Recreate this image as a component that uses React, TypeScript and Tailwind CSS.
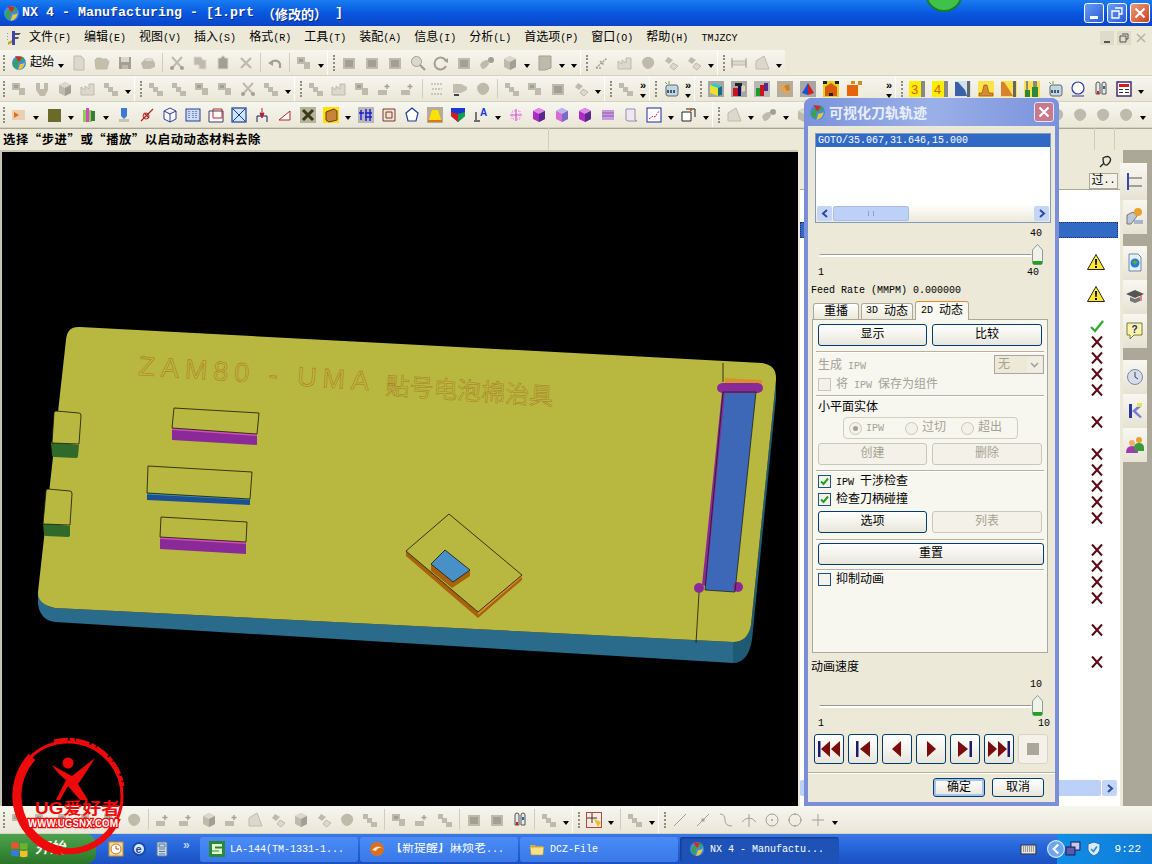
import type { ReactNode } from "react";

const gy = "#bebbad";
const gd = "#a3a093";
const gl = "#dcd9cc";

const cube = (a: string, b: string, c: string) => (
  <>
    <path d="M8 1l6 3v8l-6 3-6-3V4z" fill={b} />
    <path d="M8 1l6 3-6 3-6-3z" fill={a} />
    <path d="M8 7l6-3v8l-6 3z" fill={c} />
  </>
);

const icons: Record<string, ReactNode> = {
  globe: (
    <>
      <circle cx="8" cy="8" r="7" fill="#3f8fd8" />
      <path d="M2 9q3-7 10-7l2 3-7 2-1 7q-3-1-4-5z" fill="#3aa24a" />
      <path d="M4 1l7 1-3 5z" fill="#d8262c" />
      <path d="M9 9q4 0 5-2-1 7-7 8z" fill="#ecc53a" />
    </>
  ),
  tool: (
    <>
      <path d="M6 1h3v14H6z" fill="#3b46a8" />
      <path d="M9 3h6l-2 2h-4zM9 7h4l-1 2H9z" fill="#555" />
      <path d="M2 12l4-2v3l-4 2z" fill="#d0a030" />
      <path d="M1 3l1 0v1H1zM1 6h1v1H1zM1 9h1v1H1z" fill="#999" />
    </>
  ),
  page: <path d="M3 1h7l3 3v11H3z" fill={gl} stroke={gy} />,
  folder: <path d="M1 5l2-2h4l1 1h5v2h2l-2 8H2z" fill="#c4bfa8" stroke={gy} />,
  floppy: (
    <>
      <rect x="2" y="2" width="12" height="12" fill={gd} />
      <rect x="4" y="2" width="8" height="5" fill={gl} />
      <rect x="5" y="10" width="6" height="4" fill={gy} />
    </>
  ),
  printer: (
    <>
      <path d="M1 8l5-5h6l3 5v4l-5 2H3z" fill={gy} />
      <path d="M6 3h6l1 3H5z" fill={gl} />
    </>
  ),
  cut: (
    <>
      <path d="M3 2l10 11M13 2L3 13" stroke={gy} strokeWidth="2" fill="none" />
      <circle cx="3" cy="13" r="2" fill={gd} />
      <circle cx="13" cy="13" r="2" fill={gd} />
    </>
  ),
  copy: <path d="M2 2h7l2 3h3v9H7v-4H2z" fill={gy} stroke={gl} />,
  paste: <path d="M3 3h3l1-2h2l1 2h3v11H3z" fill={gd} stroke={gl} />,
  x: <path d="M3 3l10 10M13 3L3 13" stroke={gy} strokeWidth="2.4" fill="none" />,
  undo: (
    <>
      <path d="M4 8a5 5 0 0 1 9 1v4" stroke={gd} strokeWidth="2.2" fill="none" />
      <path d="M1 8l5-3v6z" fill={gd} />
    </>
  ),
  block: (
    <>
      <path d="M1 2h8v5h5v7H8V9H1z" fill={gy} />
      <path d="M3 4h4v3H3z" fill={gd} />
    </>
  ),
  square: (
    <>
      <rect x="2" y="3" width="12" height="11" fill={gy} />
      <rect x="4" y="5" width="8" height="7" fill={gd} />
    </>
  ),
  search: (
    <>
      <circle cx="6.5" cy="6.5" r="5" fill={gl} stroke={gd} />
      <path d="M10 10l5 5" stroke={gd} strokeWidth="2.4" />
    </>
  ),
  rotate: (
    <>
      <path d="M13 6a6 6 0 1 0 0 5" stroke={gd} strokeWidth="2" fill="none" />
      <path d="M11 6l4-3v5z" fill={gd} />
    </>
  ),
  cup: (
    <>
      <path d="M1 10q2-5 8-5l1 4q-3 5-7 5z" fill={gy} />
      <circle cx="12" cy="5" r="3" fill={gd} />
    </>
  ),
  cube: cube(gl, gy, gd),
  big: <path d="M2 1h12v12l-6 2H2z" fill={gy} stroke={gd} />,
  mill: (
    <>
      <path d="M1 14V6l4 3V5l4 3V3h5v11z" fill={gl} stroke={gy} />
    </>
  ),
  pipe: <path d="M2 2h4v6h4V2h4v7l-3 6H6L2 9z" fill={gy} />,
  net: <path d="M2 13L13 3M2 13h5M6 6l4 4" stroke={gd} strokeWidth="1.5" strokeDasharray="2 1" fill="none" />,
  blob: <path d="M2 6q3-5 8-4 5 2 4 7-2 5-7 5-5-2-5-8z" fill={gy} />,
  blobs: (
    <>
      <path d="M5 2l5 3-4 4-4-3z" fill={gy} />
      <path d="M10 8l5 3-4 4-4-3z" fill={gl} stroke={gy} />
    </>
  ),
  ruler: (
    <>
      <rect x="1" y="6" width="14" height="4" fill={gl} stroke={gy} />
      <path d="M1 3v10M15 3v10" stroke={gd} />
    </>
  ),
  wedge: <path d="M2 14L2 6 10 1l5 13z" fill={gl} stroke={gy} />,
  stair: <path d="M1 2h5v4h4v4h5v5h-6v-4H5V7H1z" fill={gy} />,
  funnel: (
    <>
      <path d="M1 3h8l6 3v3l-6 3H1z" fill="#c2bfb1" />
      <path d="M2 13h5v2H2z" fill="#444" />
    </>
  ),
  cross: (
    <>
      <path d="M1 9h9v5H1z" fill={gy} />
      <path d="M10 3v5M7.5 5.5h5" stroke={gd} strokeWidth="1.4" />
    </>
  ),
  dotted: (
    <>
      <path d="M2 3h12M3 8h10M2 13h12" stroke={gd} strokeDasharray="2 1" />
    </>
  ),
  boxYel: (
    <>
      <rect width="16" height="16" fill="#a6a6a6" />
      <path d="M2 4l4-2 8 3v9l-4 1-8-3z" fill="#e9e22c" />
      <path d="M2 4l4-2 8 3-4 2z" fill="#36c3d6" />
      <path d="M10 7l4-2v9l-4 1z" fill="#176c8a" />
    </>
  ),
  boxRed: (
    <>
      <rect width="16" height="16" fill="#a6a6a6" />
      <path d="M2 7h5v8H2z" fill="#c8141c" />
      <path d="M7 5h3v10H7z" fill="#101060" />
      <path d="M4 2h7v3H4z" fill="#222" />
      <path d="M11 4l3 1v5l-3 1z" fill="#e9d6b0" />
    </>
  ),
  boxMix: (
    <>
      <rect width="16" height="16" fill="#b8b8b8" />
      <path d="M2 7h4v8H2z" fill="#12a02c" />
      <path d="M6 4h4v11H6z" fill="#c8141c" />
      <path d="M10 2h4v8h-4z" fill="#5a2a8a" />
    </>
  ),
  boxOr: (
    <>
      <rect width="16" height="16" fill="#b5ad9a" />
      <path d="M3 3l4 1 6 6-3 4-7-6z" fill="#e2a458" />
      <path d="M7 5l5-2 1 6-3 1z" fill="#c98030" />
    </>
  ),
  boxBl: (
    <>
      <rect width="16" height="16" fill="#a6a6a6" />
      <path d="M8 2L2 12l6 2z" fill="#1c4fd0" />
      <path d="M8 2l6 10-6 2z" fill="#d41c1c" />
    </>
  ),
  boxChk: (
    <>
      <rect width="16" height="16" fill="#e8d020" />
      <path d="M2 6l6-4 6 4v9H2z" fill="#d85a0c" />
      <path d="M0 0h4v3H0zM12 0h4v3h-4zM6 12h4v3H6z" fill="#222" />
    </>
  ),
  boxOr2: (
    <>
      <rect width="16" height="16" fill="#f4f0d8" />
      <rect x="1" y="4" width="11" height="11" fill="#e8640c" />
      <path d="M12 0h4v4h-4zM5 0h4v3H5z" fill="#c89020" />
    </>
  ),
  three: (
    <>
      <rect width="12" height="16" fill="#ffee00" />
      <text x="2" y="13" fontSize="13" fontFamily="Liberation Sans" fill="#d85a0c">3</text>
      <rect x="12" y="0" width="4" height="16" fill="#888" />
    </>
  ),
  four: (
    <>
      <rect width="12" height="16" fill="#ffee00" />
      <text x="2" y="13" fontSize="13" fontFamily="Liberation Sans" fill="#d85a0c">4</text>
      <rect x="12" y="0" width="4" height="16" fill="#888" />
    </>
  ),
  slopeB: (
    <>
      <rect width="16" height="16" fill="#cfe0f0" />
      <path d="M0 1l3 0 7 8 2 6H0z" fill="#3a60a8" />
      <rect x="12" y="0" width="3" height="16" fill="#666" />
    </>
  ),
  mtn: (
    <>
      <rect width="16" height="16" fill="#ffe14a" />
      <path d="M1 15V12h3l2-8h3l2 8h4v3z" fill="#d88a30" stroke="#7a4a10" strokeWidth=".6" />
    </>
  ),
  slopeO: (
    <>
      <rect width="16" height="16" fill="#ffe14a" />
      <path d="M0 1h3l6 9 3 5H0z" fill="#d8832a" />
      <rect x="12" y="0" width="3" height="16" fill="#666" />
    </>
  ),
  brush: (
    <>
      <rect width="16" height="16" fill="#ffe14a" />
      <path d="M2 0h2v9H2zM9 0h4v6H9z" fill="#888" />
      <path d="M1 9h5v7H1zM8 6h6v10H8z" fill="#2a8a3a" />
    </>
  ),
  coil: (
    <>
      <rect x="3" y="4" width="12" height="11" rx="2" fill="#bcd8e8" stroke="#666" />
      <path d="M5 12v-3M8 12v-3M11 12v-3" stroke="#222" strokeWidth="1.4" />
      <path d="M2 1l2 2M6 0v3" stroke="#70a040" />
    </>
  ),
  ring: (
    <>
      <circle cx="8" cy="7" r="6" fill="#fff" stroke="#2a3a9a" strokeWidth="1.2" />
      <path d="M2 15h12" stroke="#2a3a9a" />
    </>
  ),
  tube: (
    <>
      <path d="M3 3a2 2 0 0 1 4 0v10H3zM9 3a2 2 0 0 1 4 0v10H9z" fill="#e8e8e8" stroke="#555" />
      <path d="M4 10h2v3H4z" fill="#d41c1c" />
      <path d="M10 5h2v3h-2z" fill="#2a6a9a" />
    </>
  ),
  table: (
    <>
      <rect x="1" y="1" width="14" height="14" fill="#fff" stroke="#3a1a6a" strokeWidth="1.4" />
      <path d="M3 3h10v3H3z" fill="#d41c1c" />
      <path d="M3 8h4v1H3zM9 8h4v1H9zM3 11h4v1H3zM9 11h4v1H9z" fill="#333" />
    </>
  ),
  tint: (
    <>
      <rect x="1" y="3" width="13" height="10" fill="#e8d0b0" />
      <path d="M3 5l5 3-5 3z" fill="#e86a1c" />
    </>
  ),
  olive: <rect x="2" y="2" width="13" height="13" fill="#6a6a2a" />,
  prism: (
    <>
      <path d="M2 3h9v12H2z" fill="#8ad04a" />
      <path d="M5 1h3v14H5z" fill="#d848c8" />
      <path d="M10 4h4v10h-4z" fill="#3a7a3a" />
    </>
  ),
  pin: (
    <>
      <path d="M5 1h6v8l-3 3-3-3z" fill="#3a7ad8" />
      <path d="M3 12h10v3H3z" fill="#c8c4b0" />
    </>
  ),
  cross2: (
    <>
      <path d="M2 14L14 2M5 6l5 5" stroke="#b4241c" strokeWidth="1.2" />
      <circle cx="7" cy="9" r="3" fill="none" stroke="#b4241c" />
    </>
  ),
  hexa: <path d="M8 1l6 3v8l-6 3-6-3V4zM8 7v8M2 4l6 3 6-3" fill="#fff" stroke="#2a3a9a" />,
  grid1: (
    <>
      <rect x="1" y="2" width="14" height="12" fill="#cde" stroke="#2a3a9a" />
      <path d="M4 4v8M8 4v8M11 4v8" stroke="#2a3a9a" strokeDasharray="1 1" />
    </>
  ),
  frame: (
    <>
      <path d="M1 4h14v11H1z" fill="#fff" stroke="#3a3a6a" />
      <path d="M5 2h9v9H5z" fill="none" stroke="#c4241c" />
    </>
  ),
  xbox: (
    <>
      <rect x="1" y="1" width="14" height="14" fill="#cfe8f8" stroke="#1a3a9a" strokeWidth="1.2" />
      <path d="M2 2l12 12M14 2L2 14" stroke="#1a3a9a" />
    </>
  ),
  crane: (
    <>
      <path d="M3 9h10v6M3 9v6" fill="none" stroke="#1a1a5a" />
      <path d="M8 1v4M6 6l2 5 2-5z" fill="#b01c3c" stroke="#b01c3c" />
    </>
  ),
  tri: <path d="M2 13L13 4v9z" fill="#fff" stroke="#b4241c" />,
  bug: (
    <>
      <rect width="16" height="16" fill="#b5b39a" />
      <path d="M3 3l10 10M13 3L3 13" stroke="#3a3a1a" strokeWidth="3" />
    </>
  ),
  crate: (
    <>
      <rect width="16" height="16" fill="#ffe100" />
      <path d="M3 5l8-3 3 2v9l-8 2-3-2z" fill="#c8843a" stroke="#6a3a10" />
    </>
  ),
  pai: (
    <>
      <rect width="16" height="16" fill="#b8b8b8" />
      <path d="M3 3v10M1 6h5M8 2v12M12 2v12M7 6h7M7 10h7" stroke="#1a1ad8" strokeWidth="1.4" />
    </>
  ),
  box2: <path d="M2 2h12v12H2zM5 5h6v6H5z" fill="#f0e4d0" stroke="#7a3a3a" />,
  isoBlue: <path d="M8 1l6 5-2 8H4L2 6z" fill="#fff" stroke="#1a3a9a" strokeWidth="1.2" />,
  bell: (
    <>
      <rect width="16" height="16" fill="#b5ad9a" />
      <path d="M5 3h6l3 10H2z" fill="#ffe100" />
      <path d="M1 13h14v2H1z" fill="#d87a1c" />
    </>
  ),
  shield: (
    <>
      <path d="M1 1h14v8l-7 6-7-6z" fill="#1a3ad8" />
      <path d="M1 5l7 2v8l-7-6z" fill="#d41c1c" />
      <path d="M8 7l7-2v4l-7 6z" fill="#12a04c" />
    </>
  ),
  letterA: (
    <>
      <path d="M3 5v8M1 14h6" stroke="#444" strokeWidth="1.4" />
      <text x="7" y="9" fontSize="10" fontWeight="700" fontFamily="Liberation Sans" fill="#1a3ad8">A</text>
    </>
  ),
  pinkT: (
    <>
      <path d="M2 8h12M8 2v12" stroke="#d84ad8" strokeWidth="1.2" />
      <rect x="4" y="4" width="8" height="8" fill="none" stroke="#e87ae8" strokeDasharray="1 1" />
    </>
  ),
  pinkB: cube("#e08ae8", "#b02ac8", "#5a2a8a"),
  pinkC: cube("#b8b8f0", "#d86ad8", "#7a6ac8"),
  pinkD: (
    <>
      <rect x="2" y="3" width="12" height="10" fill="#c89ae0" />
      <path d="M2 6h12M2 9h12" stroke="#8a5ab0" />
    </>
  ),
  scroll: <path d="M3 2h9v11l2 1H5l-2-1z" fill="#f0e8f0" stroke="#9a8ab0" />,
  zig: (
    <>
      <rect x="1" y="1" width="14" height="14" fill="#fff" stroke="#1a2a9a" />
      <path d="M3 12l4-3 2 1 4-6" stroke="#d41c6c" strokeDasharray="2 1" fill="none" />
    </>
  ),
  frame2: (
    <>
      <path d="M1 5h9v9H1z" fill="#fff" stroke="#222" />
      <path d="M5 2h9v8" fill="none" stroke="#222" />
      <path d="M9 1h2v3H9z" fill="#c8641c" />
    </>
  ),
  selected: (
    <>
      <rect x="0.5" y="0.5" width="15" height="15" fill="none" stroke="#b4443c" />
      <path d="M6 1v10M1 6h10" stroke="#5a2a1a" />
      <path d="M8 7l7 3-3 5z" fill="#e8c020" />
    </>
  ),
  lineA: <path d="M2 14L14 2" stroke="#a3a092" />,
  lineB: (
    <>
      <path d="M2 14L14 2" stroke="#a3a092" />
      <rect x="6.5" y="6.5" width="3" height="3" fill="#a3a092" />
    </>
  ),
  curve: <path d="M2 2q5 0 5 6t7 6" stroke="#a3a092" fill="none" />,
  arc: <path d="M1 10q7-8 14 0M8 2v13" stroke="#a3a092" fill="none" />,
  circ: (
    <>
      <circle cx="8" cy="8" r="6" fill="none" stroke="#a3a092" />
      <circle cx="8" cy="8" r="1" fill="#a3a092" />
    </>
  ),
  circ2: (
    <>
      <circle cx="8" cy="8" r="6" fill="none" stroke="#a3a092" />
      <path d="M1 8h2M13 8h2M8 1v2M8 13v2" stroke="#a3a092" />
    </>
  ),
  plus: <path d="M2 8h12M8 2v12" stroke="#a3a092" />,
};

type Tok = string;

// tokens: ^ first grip, : new group, | thin separator, v dropdown, » overflow
function Toolbar({ items, fill = true }: { items: Tok[]; fill?: boolean }) {
  return (
    <div className="flex h-[26px] items-stretch border-b border-[#d6d2c0] bg-[#ece9d8]">
      <div className={`flex items-center bg-linear-to-b from-[#f7f6ef] to-[#eae7d8] ${fill ? "flex-1" : ""}`}>
        {items.map((t, i) => {
          if (t === "^")
            return <div key={i} className="ml-[3px] mr-[2px] h-[16px] w-[2px] border-l-2 border-dotted border-[#8f8c7f]" />;
          if (t === ":")
            return (
              <div key={i} className="flex h-full w-[10px] shrink-0 items-center gap-[3px] border-l border-white">
                <div className="w-[2px]" />
                <div className="h-[16px] border-l-2 border-dotted border-[#8f8c7f]" />
              </div>
            );
          if (t === "|")
            return (
              <div key={i} className="flex h-full w-[6px] shrink-0 justify-center py-[3px]">
                <div className="w-px bg-[#d0cdbd]" />
              </div>
            );
          if (t === "v")
            return (
              <div key={i} className="flex h-full w-[12px] shrink-0 items-center justify-center pt-[6px]">
                <div className="h-0 w-0 border-x-[3px] border-t-[4px] border-x-transparent border-t-black" />
              </div>
            );
          if (t === "»")
            return (
              <div key={i} className="flex w-[12px] shrink-0 flex-col items-center font-['Liberation_Sans',sans-serif] text-[11px] font-bold leading-[10px]">
                <span>»</span>
                <div className="mt-[4px] h-0 w-0 border-x-[3px] border-t-[4px] border-x-transparent border-t-black" />
              </div>
            );
          if (t === "_") return <div key={i} className="w-[18px] shrink-0" />;
          if (t === "起始")
            return <span key={i} className="w-[25px] shrink-0 text-[12px]">起始</span>;
          return (
            <div key={i} className="flex w-[23px] shrink-0 items-center justify-center">
              <svg width="16" height="16" viewBox="0 0 16 16">{icons[t]}</svg>
            </div>
          );
        })}
      </div>
    </div>
  );
}

// SimSun-like mix: latin runs are half of the CJK width
function Mx({ t }: { t: string }) {
  const parts = t.split(/([\x00-\x7f]+)/).filter(Boolean);
  return (
    <>
      {parts.map((p, i) =>
        /^[\x00-\x7f]+$/.test(p) ? (
          <span key={i} className="whitespace-pre text-[0.834em]">{p}</span>
        ) : (
          <span key={i}>{p}</span>
        ),
      )}
    </>
  );
}

const row1 = ["^", "globe", "起始", "v", "page", "folder", "floppy", "printer", "|", "cut", "copy", "paste", "x", "|", "undo", "|", "block", "v", ":", "square", "square", "square", "search", "rotate", "square", "cup", "cube", "v", "big", "v", "v", ":", "net", "mill", "blob", "blobs", "blobs", "v", ":", "ruler", "wedge", "v"];
const row2 = ["^", "block", "pipe", "cube", "mill", "stair", "v", ":", "stair", "stair", "block", "block", "cut", "stair", "v", ":", "stair", "mill", "block", "cross", "cross", "|", "dotted", "funnel", "blob", "|", "stair", "block", "square", "blobs", "v", ":", "stair", "»", ":", "coil", "»", ":", "boxYel", "boxRed", "boxMix", "boxOr", "boxBl", "boxChk", "boxOr2", "_", "»", ":", "three", "four", "slopeB", "mtn", "slopeO", "brush", "coil", "ring", "tube", "table", "v"];
const row3 = ["^", "tint", "v", "olive", "v", "prism", "v", "pin", "cross2", "hexa", "grid1", "frame", "xbox", "crane", "tri", "bug", "crate", "v", "pai", "box2", "isoBlue", "bell", "shield", "letterA", "v", "pinkT", "pinkB", "pinkC", "pinkB", "pinkD", "scroll", "zig", "v", "frame2", "v", ":", "wedge", "v", "cup", "v", "cube", "cube", "cube", "cube", "cube", "cube", "cube", "cube", "cube", "cube", "cube", "blob", "blob", "blob", "blob", "v"];
const rowBottom = ["^", "block", "block", "block", "block", "block", "blob", "|", "cross", "cross", "cube", "cross", "wedge", "blobs", "cube", "blobs", "blob", "stair", "|", "block", "cross", "stair", "|", "square", "square", "tube", "|", "stair", "v", ":", "selected", "v", "|", "stair", "v", ":", "lineA", "lineB", "curve", "arc", "circ", "circ2", "plus", "v"];

function Btn({ label, disabled, className = "w-[109px]" }: { label: string; disabled?: boolean; className?: string }) {
  return (
    <div
      className={`flex h-[22px] items-center justify-center rounded-[3px] border ${
        disabled
          ? "border-[#c9c7ba] bg-[#f4f2e8] text-[#a5a293]"
          : "border-[#003c74] bg-linear-to-b from-white to-[#e8e6da] text-black"
      } ${className}`}
    >
      {label}
    </div>
  );
}

function Check({ checked, disabled, label }: { checked?: boolean; disabled?: boolean; label: string }) {
  return (
    <div className={`flex h-[12px] items-center gap-[5px] ${disabled ? "text-[#a5a293]" : ""}`}>
      <div className={`flex h-[13px] w-[13px] items-center justify-center border ${disabled ? "border-[#c9c7ba] bg-[#f4f2e8]" : "border-[#1c5180] bg-[#f4f2ea]"}`}>
        {checked && (
          <svg width="9" height="9" viewBox="0 0 9 9">
            <path d="M1 4.5l2.5 2.5L8 1.5" stroke="#21a121" strokeWidth="2" fill="none" />
          </svg>
        )}
      </div>
      <span className="pt-[2px] leading-[12px]"><Mx t={label} /></span>
    </div>
  );
}

function Radio({ label, on, w }: { label: string; on?: boolean; w: string }) {
  return (
    <div className={`flex items-center gap-[4px] text-[#a5a293] ${w}`}>
      <div className="flex h-[13px] w-[13px] items-center justify-center rounded-full border border-[#c9c7ba] bg-[#f4f2e8]">
        {on && <div className="h-[5px] w-[5px] rounded-full bg-[#a5a293]" />}
      </div>
      <span><Mx t={label} /></span>
    </div>
  );
}

function Slider() {
  return (
    <div className="flex h-[22px] items-center pl-[11px] pr-[12px]">
      <div className="mt-[2px] h-[3px] flex-1 rounded-full border-t border-[#9d9c92] bg-white" />
      <div className="flex h-[21px] w-[11px] flex-col">
        <svg width="11" height="21" viewBox="0 0 11 21">
          <path d="M5.5 .5L10.5 6v13l-1 1.500h-8l-1-1.500V6z" fill="#f2f2ea" stroke="#86a08c" />
          <path d="M1 17h9v2.500l-1 1H2l-1-1z" fill="#21a121" />
        </svg>
      </div>
    </div>
  );
}

const Sep = () => <div className="-mx-[2px] h-px bg-[#b5b2a4] shadow-[0_1px_0_white]" />;

type Shape = "first" | "prev" | "back" | "play" | "next" | "last";
const transport: Shape[] = ["first", "prev", "back", "play", "next", "last"];
const transportPath: Record<Shape, ReactNode> = {
  first: (
    <>
      <path d="M0 3h2.500v16H0z" fill="#1a1a6e" />
      <path d="M12 3v16L3 11zM22 3v16l-9-8z" fill="#7a0c0c" />
    </>
  ),
  prev: (
    <>
      <path d="M4 3h2.500v16H4z" fill="#1a1a6e" />
      <path d="M18 3v16L8 11z" fill="#7a0c0c" />
    </>
  ),
  back: <path d="M15 3v16L6 11z" fill="#7a0c0c" />,
  play: <path d="M7 3v16l9-8z" fill="#7a0c0c" />,
  next: (
    <>
      <path d="M4 3v16l10-8z" fill="#7a0c0c" />
      <path d="M15.500 3H18v16h-2.500z" fill="#1a1a6e" />
    </>
  ),
  last: (
    <>
      <path d="M0 3v16l9-8zM10 3v16l9-8z" fill="#7a0c0c" />
      <path d="M19.500 3H22v16h-2.500z" fill="#1a1a6e" />
    </>
  ),
};

const sideTabs: { icon: ReactNode; gap?: boolean }[] = [
  {
    icon: (
      <>
        <path d="M3 1h2v17H3z" fill="#3a46a8" />
        <path d="M5 6h13M5 14h13" stroke="#555" />
      </>
    ),
  },
  {
    icon: (
      <>
        <path d="M2 8l6-3 4 4-6 8H2z" fill="#bfc8d8" stroke="#777" />
        <circle cx="13" cy="5" r="4" fill="#e8a030" />
        <path d="M9 13h9v4H9z" fill="#a8b4c8" />
      </>
    ),
  },
  {
    gap: true,
    icon: (
      <>
        <path d="M4 1h9l3 3v14H4z" fill="#e8f0f8" stroke="#6a8aa8" />
        <circle cx="10" cy="10" r="4.500" fill="#2a7ad8" />
        <path d="M7 9q3-3 6 0l-3 3z" fill="#5aa83a" />
      </>
    ),
  },
  {
    icon: (
      <>
        <path d="M1 7l9-4 9 4-9 4z" fill="#555" />
        <path d="M5 10v4l5 2 5-2v-4l-5 2z" fill="#777" />
        <path d="M16 8v6" stroke="#d41c1c" />
      </>
    ),
  },
  {
    icon: (
      <>
        <path d="M2 2h15v12H9l-4 4v-4H2z" fill="#fbf4a8" stroke="#7a7a40" />
        <text x="6.500" y="12" fontSize="10" fontWeight="700" fontFamily="Liberation Sans" fill="#1a2a8a">?</text>
      </>
    ),
  },
  {
    gap: true,
    icon: (
      <>
        <circle cx="10" cy="10" r="7.500" fill="#d6dce8" stroke="#7a8aa8" />
        <path d="M10 5v5l3 2" stroke="#444" fill="none" />
      </>
    ),
  },
  {
    icon: (
      <>
        <path d="M4 3h3v14H4z" fill="#2a3a9a" />
        <path d="M7 10l8-7 2 2-6 5 6 6-2 1z" fill="#7a7ad8" />
        <path d="M12 2h5v4h-5z" fill="#e8e060" />
      </>
    ),
  },
  {
    icon: (
      <>
        <circle cx="7" cy="8" r="3" fill="#e8b070" />
        <path d="M1 18q0-7 6-7t6 7z" fill="#a03ab0" />
        <circle cx="14" cy="5" r="3" fill="#e8a030" />
        <path d="M9 13q0-5 5-5t5 5v3H10z" fill="#3a9a3a" />
      </>
    ),
  },
];

const statusRows: ("" | "warn" | "ok" | "x")[] = ["", "", "", "", "warn", "", "warn", "", "ok", "x", "x", "x", "x", "", "x", "", "x", "x", "x", "x", "x", "", "x", "x", "x", "x", "", "x", "", "x"];

function TaskBtn({ active, icon, text, w = "w-[158px]" }: { active?: boolean; icon: ReactNode; text: string; w?: string }) {
  return (
    <div
      className={`flex h-[25px] ${w} shrink-0 items-center gap-[5px] rounded-[3px] pl-[9px] ${
        active ? "bg-[#1e52b7] shadow-[inset_1px_1px_2px_#123a8a]" : "bg-linear-to-b from-[#4a8cf6] to-[#3a78e8]"
      }`}
    >
      <svg width="16" height="16" viewBox="0 0 16 16">{icon}</svg>
      <span className="truncate text-white"><Mx t={text} /></span>
    </div>
  );
}

function Viewport() {
  return (
    <svg width="796" height="654" viewBox="2 152 796 654" className="block">
      <rect x="2" y="152" width="796" height="654" fill="#000" />
      {/* plate side */}
      <path d="M38 592L38 604Q40 620 55 622L733 663L733 642L55 608Q40 606 38 592Z" fill="#2a6a8a" />
      <path d="M733 642Q748 642 751 625L776 380V398L752 640Q748 663 733 663Z" fill="#1f5a74" />
      {/* plate top */}
      <path d="M80 327Q67 326 66 340L38 592Q37 604 55 608L733 642Q748 642 751 625L776 380Q777 365 762 363Z" fill="#b8b840" />
      {/* engraved text */}
      <text transform="rotate(3.8 138 375)" x="138" y="375" fontSize="27" letterSpacing="6" fontFamily="Liberation Sans" fill="none" stroke="#b07c24" strokeWidth=".6">ZAM80 - UMA -</text>
      <text transform="rotate(3.8 385 394)" x="385" y="394" fontSize="24" fontFamily="Noto Sans CJK SC" fill="none" stroke="#a87c26" strokeWidth=".5">贴号电泡棉治具</text>
      {/* left lugs */}
      <path d="M51 442L79 445L78 456Q78 458 76 458L54 457Q52 457 52 455Z" fill="#2f6a2a" />
      <path d="M56 411L79 413Q81 413 81 416L79 444L52 443L54 413Q54 411 56 411Z" fill="#b8b840" stroke="#141408" strokeWidth=".8" />
      <path d="M43 523L70 526L70 535Q70 537 68 537L46 536Q44 536 44 534Z" fill="#2f6a2a" />
      <path d="M48 489L70 491Q72 491 72 494L70 525L43 524L46 491Q46 489 48 489Z" fill="#b8b840" stroke="#141408" strokeWidth=".8" />
      {/* raised bars */}
      <path d="M172 428L257 434L257 445L172 440Z" fill="#8a2a98" />
      <path d="M172 428L257 434L257 436L172 430Z" fill="#d050b8" />
      <path d="M174 408L259 413L257 434L172 428Z" fill="#b8b840" stroke="#141408" strokeWidth=".8" />
      <path d="M147 493L250 499L250 505L147 500Z" fill="#1d4f94" />
      <path d="M147 493L250 499L250 500L147 494.500Z" fill="#3a9aa0" />
      <path d="M148 466L252 472L250 499L147 493Z" fill="#b8b840" stroke="#141408" strokeWidth=".8" />
      <path d="M160 537L246 542L246 554L160 549Z" fill="#8a2a98" />
      <path d="M160 537L246 542L246 544L160 539Z" fill="#d050b8" />
      <path d="M161 517L247 522L246 542L160 537Z" fill="#b8b840" stroke="#141408" strokeWidth=".8" />
      {/* diamond pad */}
      <path d="M406 551V556L478 618L522 580V575L478 612Z" fill="#a8620c" />
      <path d="M478 612L522 575V577L478 615Z" fill="#d8902a" />
      <path d="M449 514L522 575L478 612L406 551Z" fill="#b8b840" stroke="#141408" strokeWidth=".8" strokeLinejoin="round" />
      <path d="M431 564V571L452 588L470 576V570L453 582Z" fill="#a8620c" />
      <path d="M445 550L470 570L453 582L431 564Z" fill="#4a90c8" stroke="#141408" strokeWidth=".8" />
      {/* slot */}
      <path d="M725 378L762 380L762 385L725 384Z" fill="#d8902a" />
      <path d="M723 392H756L735 592L705 590Z" fill="#3d68b8" />
      <path d="M722 392L725 392L706 586L702 585Z" fill="#8a2a98" />
      <path d="M722 383H758Q763 384 763 388Q763 392 758 393H722Q717 392 717 388Q717 384 722 383Z" fill="#8a2a98" />
      <circle cx="699" cy="588" r="5" fill="#8a2a98" />
      <circle cx="738" cy="587" r="5" fill="#8a2a98" />
      <path d="M723 392H756L735 592L705 590Z" fill="none" stroke="#141408" strokeWidth=".7" />
      <path d="M723 363V382M699 593L696 643" stroke="#141408" strokeWidth=".8" />
    </svg>
  );
}

export default function App() {
  return (
    <div lang="zh-CN" className="relative h-[864px] w-[1152px] overflow-hidden bg-[#ece9d8] font-['Liberation_Mono','Noto_Sans_CJK_SC',monospace] text-[12px] leading-none text-black">
      {/* title bar */}
      <div className="flex h-[26px] items-center bg-linear-to-b from-[#1a7cf0] via-[#0a58e0] to-[#0a44c8] pl-[3px] text-white">
        <svg width="17" height="17" viewBox="0 0 16 16">{icons.globe}</svg>
        <span className="ml-[2px] whitespace-pre font-bold [text-shadow:1px_1px_0_#0a2a88] text-[13.33px]">NX 4 - Manufacturing - [1.prt </span>
        <span className="whitespace-pre font-['Noto_Sans_CJK_SC',sans-serif] font-bold [text-shadow:1px_1px_0_#0a2a88] text-[13px]">（修改的）</span>
        <span className="ml-[8px] font-bold [text-shadow:1px_1px_0_#0a2a88] text-[13.33px]">]</span>
        <div className="ml-auto mr-[2px] flex gap-[3px]">
          <div className="flex h-[20px] w-[20px] items-end rounded-[3px] border border-white bg-linear-to-br from-[#6a9cf4] to-[#2a5ad8] pb-[3px] pl-[5px]">
            <div className="h-[3px] w-[8px] bg-white" />
          </div>
          <div className="flex h-[20px] w-[20px] items-center justify-center rounded-[3px] border border-white bg-linear-to-br from-[#6a9cf4] to-[#2a5ad8]">
            <svg width="12" height="12" viewBox="0 0 12 12">
              <path d="M4 1h7v6H8M1 4h7v7H1z" stroke="#fff" strokeWidth="1.300" fill="none" />
            </svg>
          </div>
          <div className="flex h-[20px] w-[20px] items-center justify-center rounded-[3px] border border-white bg-linear-to-br from-[#ec9a78] to-[#c8401c]">
            <svg width="12" height="12" viewBox="0 0 12 12">
              <path d="M1.500 1.500l9 9M10.500 1.500l-9 9" stroke="#fff" strokeWidth="2" />
            </svg>
          </div>
        </div>
      </div>

      {/* menu bar */}
      <div className="flex h-[24px] items-center bg-[#ece9d8]">
        <div className="flex w-[29px] shrink-0 justify-center pr-[1px]">
          <svg width="16" height="16" viewBox="0 0 16 16">{icons.tool}</svg>
        </div>
        <div className="flex gap-[13px]">
          {["文件(F)", "编辑(E)", "视图(V)", "插入(S)", "格式(R)", "工具(T)", "装配(A)", "信息(I)", "分析(L)", "首选项(P)", "窗口(O)", "帮助(H)", "TMJZCY"].map((m) => (
            <span key={m} className="whitespace-pre"><Mx t={m} /></span>
          ))}
        </div>
        <div className="ml-auto mr-[4px] flex items-center gap-[3px] text-[#6a685c]">
          <div className="flex h-[14px] w-[14px] items-end justify-center bg-[#dedbca] pb-[2px]"><div className="h-[2px] w-[6px] bg-[#555]" /></div>
          <div className="flex h-[14px] w-[14px] items-center justify-center bg-[#dedbca]">
            <svg width="10" height="10" viewBox="0 0 10 10"><path d="M3 1h6v5H7M1 3h6v6H1z" stroke="#555" fill="none" /></svg>
          </div>
          <div className="flex h-[14px] w-[14px] items-center justify-center">
            <svg width="10" height="10" viewBox="0 0 10 10"><path d="M1 1l8 8M9 1l-8 8" stroke="#b8b5a6" strokeWidth="1.600" /></svg>
          </div>
        </div>
      </div>

      {/* toolbars */}
      <Toolbar items={row1} fill={false} />
      <Toolbar items={row2} />
      <Toolbar items={row3} />

      {/* prompt line */}
      <div className="flex h-[22px] items-center bg-[#ece9d8] shadow-[inset_0_1px_0_#a8a595]">
        <span className="w-[548px] pl-[3px] font-['Noto_Sans_CJK_SC',sans-serif] text-[12.300px] font-bold tracking-[0.6px]">选择“步进”或“播放”以启动动态材料去除</span>
        <div className="h-full flex-1 border-l border-[#d0cdbd]" />
        <div className="h-full w-[20px] border-l border-[#d0cdbd]" />
        <div className="h-full w-[38px] border-l border-[#d0cdbd]" />
      </div>

      {/* main area */}
      <div className="flex h-[656px]">
        <div className="w-[798px] shrink-0 bg-[#c8c5b6] pl-[2px] pt-[2px]">
          <Viewport />
        </div>
        <div className="flex flex-1 flex-col pl-[2px]">
          <div className="flex h-[23px] items-center justify-end pr-[8px]">
            <svg width="14" height="14" viewBox="0 0 14 14">
              <path d="M2 12l4-4M5 3q5-3 7 0t-3 7q-4 1-4-7z" stroke="#222" fill="none" strokeWidth="1.300" />
            </svg>
          </div>
          <div className="flex h-[17px] justify-end border-b border-[#aca899] bg-[#ece9d8]">
            <div className="mr-[2px] flex w-[29px] items-center justify-center border border-[#aca899] bg-[#f4f2e8]"><Mx t="过.." /></div>
          </div>
          <div className="flex flex-1 flex-col bg-white pr-[2px]">
            <div className="flex flex-col">
              {statusRows.map((s, i) => (
                <div key={i} className={`flex h-[16px] w-full items-center justify-end pr-[13px] ${i === 2 ? "border border-dotted border-[#2a2a6a] bg-[#316ac5]" : ""}`}>
                  {s === "warn" && (
                    <svg width="18" height="16" viewBox="0 0 18 16">
                      <path d="M9 .5l8.500 15H.5z" fill="#ffe930" stroke="#222" />
                      <path d="M8 5h2l-.3 6H8.300zM8 12h2v2H8z" fill="#000" />
                    </svg>
                  )}
                  {s === "ok" && (
                    <svg width="16" height="16" viewBox="0 0 16 16">
                      <path d="M2 9l4 4 8-10" stroke="#2ea82e" strokeWidth="2.200" fill="none" />
                    </svg>
                  )}
                  {s === "x" && (
                    <svg width="16" height="16" viewBox="0 0 16 16">
                      <path d="M3 2.500l10 11M13 2.500l-10 11" stroke="#5a0c14" strokeWidth="2" />
                    </svg>
                  )}
                </div>
              ))}
            </div>
            <div className="mt-auto mb-[9px] flex h-[18px] items-center justify-end pr-[1px]">
              <div className="h-[16px] flex-1 rounded-[2px] bg-[#bcd0f8]" />
              <div className="ml-[1px] flex h-[16px] w-[15px] items-center justify-center rounded-[2px] bg-[#c4d5f8]">
                <svg width="8" height="9" viewBox="0 0 8 9"><path d="M2 1l4 3.500L2 8" stroke="#2a4aa0" strokeWidth="2" fill="none" /></svg>
              </div>
            </div>
          </div>
        </div>
        <div className="flex w-[32px] shrink-0 flex-col border-l-[3px] border-[#ece9d8] bg-[#aca899] pt-[13px]">
          {sideTabs.map((t, i) => (
            <div key={i} className={`flex items-center justify-center bg-linear-to-b from-[#f8f7f0] to-[#e6e3d4] ${i === 0 ? "-ml-[3px] h-[37px] w-[27px]" : "h-[34px] w-[24px]"} ${t.gap ? "mt-[12px]" : ""}`}>
              <svg width="20" height="20" viewBox="0 0 20 20">{t.icon}</svg>
            </div>
          ))}
        </div>
      </div>

      {/* bottom toolbar */}
      <div className="h-[28px] [&>div]:h-[28px]">
        <Toolbar items={rowBottom} />
      </div>

      {/* taskbar */}
      <div className="flex h-[30px] items-center bg-linear-to-b from-[#3a78e6] via-[#2463d8] to-[#1c50c0]">
        <div className="flex h-full w-[96px] shrink-0 items-center gap-[5px] rounded-r-[10px] bg-linear-to-b from-[#4ea24e] via-[#3a8e3a] to-[#2a742a] pl-[10px] text-[15px] font-bold italic text-white">
          <svg width="20" height="20" viewBox="0 0 16 16">
            <path d="M1 3q3-1 6 0v5q-3-1-6 0z" fill="#e8552c" />
            <path d="M8 3q3 1 6 0v5q-3 1-6 0z" fill="#6ab42c" />
            <path d="M1 9q3-1 6 0v5q-3-1-6 0z" fill="#3a7ad8" />
            <path d="M8 9q3 1 6 0v5q-3 1-6 0z" fill="#f0c02c" />
          </svg>
          开始
        </div>
        <div className="ml-[12px] flex w-[92px] shrink-0 items-center gap-[7px]">
          <svg width="16" height="16" viewBox="0 0 16 16">
            <rect x="1" y="1" width="14" height="14" fill="#f0d8a0" stroke="#c89030" />
            <circle cx="8" cy="8" r="5" fill="#fff" stroke="#c87a1c" />
            <path d="M8 5v3h3" stroke="#a84a1c" fill="none" />
          </svg>
          <svg width="16" height="16" viewBox="0 0 16 16">
            <circle cx="8" cy="8" r="6" fill="#d8e8f8" stroke="#1a4aa8" strokeWidth="2" />
            <text x="4.500" y="12" fontSize="11" fontWeight="700" fontFamily="Liberation Sans" fill="#1a4aa8">e</text>
          </svg>
          <svg width="16" height="16" viewBox="0 0 16 16">
            <rect x="3" y="1" width="10" height="14" rx="1" fill="#c8d8e8" stroke="#5a7a9a" />
            <path d="M5 3h6v3H5zM5 8h6M5 10.500h6M5 13h6" stroke="#5a7a9a" fill="none" />
          </svg>
          <span className="-mt-[8px] ml-[6px] font-['Liberation_Sans',sans-serif] text-[12px] font-bold text-[#bcd4f8]">»</span>
        </div>
        <div className="flex items-center gap-[2px]">
          <TaskBtn
            text="LA-144(TM-1331-1..."
            icon={
              <>
                <rect width="16" height="16" fill="#2a8a3a" />
                <path d="M3 3h10v2.500H6v2h7V13H3v-2.500h7v-1H3z" fill="#e8f8d0" />
              </>
            }
          />
          <TaskBtn
            text="【新提醒】麻烦老..."
            icon={
              <>
                <circle cx="8" cy="8" r="7" fill="#d8701c" />
                <path d="M3 9q5-6 10-2-4-1-6 3z" fill="#f8e8d0" />
              </>
            }
          />
          <TaskBtn
            text="DCZ-File"
            icon={
              <>
                <path d="M1 4h5l1 1h7v2H1z" fill="#d8b040" />
                <path d="M1 6h14l-1 8H2z" fill="#f8e08a" stroke="#b08a2a" strokeWidth=".6" />
              </>
            }
          />
          <TaskBtn active text="NX 4 - Manufactu..." w="w-[159px]" icon={icons.globe} />
        </div>
        <div className="ml-auto flex h-full w-[132px] shrink-0 items-center justify-end pr-[11px] [background:linear-gradient(to_right,transparent_37px,#118ee6_37px,#0e7cd8)]">
          <svg width="17" height="14" viewBox="0 0 17 14" className="mr-[10px]">
            <rect x="1" y="3" width="15" height="9" fill="#e8e8e0" stroke="#333" />
            <path d="M3 5h11M3 7h11M3 9h11" stroke="#444" strokeDasharray="1 1" />
          </svg>
          <svg width="18" height="18" viewBox="0 0 16 16">
            <circle cx="8" cy="8" r="7.500" fill="#6aa6f0" stroke="#d8e8f8" />
            <path d="M10 4l-4 4 4 4" stroke="#fff" strokeWidth="2" fill="none" />
          </svg>
          <svg width="16" height="16" viewBox="0 0 16 16" className="mr-[5px]">
            <rect x="6" y="1" width="9" height="8" fill="#c8c8e8" stroke="#1a1a5a" />
            <rect x="1" y="6" width="9" height="8" fill="#5a5ab0" stroke="#1a1a5a" />
          </svg>
          <svg width="16" height="16" viewBox="0 0 16 16" className="mr-[13px]">
            <path d="M8 1l6 2v6q-1 4-6 6-5-2-6-6V3z" fill="#d8ecf8" stroke="#2a6ab0" />
            <path d="M5 8l2.500 2.500L11 5.500" stroke="#2a8ad0" strokeWidth="1.600" fill="none" />
          </svg>
          <span className="text-[11px] text-white">9:22</span>
        </div>
      </div>

      {/* green badge peeking in at the top of the window */}
      <div className="absolute -top-[26px] left-[925px] h-[38px] w-[38px] rounded-full border-2 border-[#1d7a2a] bg-[#3fc24a]" />

      {/* floating dialog */}
      <div className="absolute left-[804px] top-[98px] flex h-[708px] w-[255px] flex-col rounded-t-[8px] bg-[#7b8fd8]">
        <div className="flex h-[28px] shrink-0 items-center rounded-t-[8px] bg-linear-to-r from-[#7a92dc] via-[#9ab0e8] to-[#7a92dc] pl-[5px] pr-[5px]">
          <svg width="17" height="17" viewBox="0 0 16 16">{icons.globe}</svg>
          <span className="ml-[3px] font-['Noto_Sans_CJK_SC',sans-serif] text-[14px] font-bold text-[#e8eefa]">可视化刀轨轨迹</span>
          <div className="ml-auto flex h-[20px] w-[20px] items-center justify-center rounded-[3px] border border-[#dfe4f8] bg-[#c87a8c]">
            <svg width="12" height="12" viewBox="0 0 12 12">
              <path d="M1.500 1.500l9 9M10.500 1.500l-9 9" stroke="#fff" strokeWidth="2.200" />
            </svg>
          </div>
        </div>
        <div className="mx-[4px] mb-[4px] flex flex-1 flex-col bg-[#ece9d8]">
          {/* list */}
          <div className="ml-[7px] mt-[7px] flex h-[90px] w-[236px] shrink-0 flex-col border border-[#7f9db9] bg-white">
            <div className="flex h-[13px] items-center bg-[#316ac5] pl-[2px] text-[10px] text-white">GOTO/35.067,31.646,15.000</div>
            <div className="mt-auto flex h-[18px] items-center bg-linear-to-b from-white to-[#ece9d8] px-[1px]">
              <div className="flex h-[15px] w-[15px] items-center justify-center rounded-[2px] bg-[#c4d5f8]">
                <svg width="8" height="9" viewBox="0 0 8 9"><path d="M6 1L2 4.500 6 8" stroke="#2a4aa0" strokeWidth="2" fill="none" /></svg>
              </div>
              <div className="ml-[1px] flex h-[15px] w-[76px] items-center justify-center rounded-[2px] border border-[#a8bce8] bg-[#bcd0f8] text-[8px] text-[#7a8ac0]">
                <div className="h-[5px] w-[6px] border-x border-[#8aa0d0]" />
              </div>
              <div className="ml-auto flex h-[15px] w-[15px] items-center justify-center rounded-[2px] bg-[#c4d5f8]">
                <svg width="8" height="9" viewBox="0 0 8 9"><path d="M2 1l4 3.500L2 8" stroke="#2a4aa0" strokeWidth="2" fill="none" /></svg>
              </div>
            </div>
          </div>
          <div className="mt-[5px] h-[12px] shrink-0 pr-[13px] text-right text-[10px] leading-[12px]">40</div>
          <div className="mt-[3px] shrink-0"><Slider /></div>
          <div className="mt-[2px] flex h-[12px] shrink-0 justify-between pl-[10px] pr-[16px] text-[10px] leading-[12px]">
            <span>1</span>
            <span>40</span>
          </div>
          <div className="mt-[6px] h-[12px] shrink-0 pl-[3px] text-[10px] leading-[12px]">Feed Rate (MMPM) 0.000000</div>

          {/* tabs */}
          <div className="mt-[5px] flex h-[17px] shrink-0 items-end gap-[2px] pl-[5px]">
            <div className="flex h-[16px] w-[46px] items-center justify-center rounded-t-[3px] border border-b-0 border-[#aca899] bg-linear-to-b from-white to-[#ece9d8]">重播</div>
            <div className="flex h-[16px] w-[52px] items-center justify-center rounded-t-[3px] border border-b-0 border-[#aca899] bg-linear-to-b from-white to-[#ece9d8]"><Mx t="3D 动态" /></div>
            <div className="z-10 -mb-px flex h-[19px] w-[54px] items-center justify-center rounded-t-[3px] border border-b-0 border-[#aca899] border-t-[#e68b2c] bg-[#f9f8f1]"><Mx t="2D 动态" /></div>
          </div>

          {/* tab panel */}
          <div className="ml-[4px] flex h-[334px] w-[236px] shrink-0 flex-col border border-[#a8a89c] bg-[#f7f6ef] px-[5px]">
            <div className="mt-[4px] flex gap-[5px]">
              <Btn label="显示" />
              <Btn label="比较" className="w-[110px]" />
            </div>
            <div className="mt-[5px]"><Sep /></div>
            <div className="mt-[3px] flex h-[19px] items-center justify-between text-[#a5a293]">
              <span className="pt-[3px]"><Mx t="生成 IPW" /></span>
              <div className="-mr-[2px] flex h-[19px] w-[50px] items-center border border-[#a8a89c] bg-[#ece9d8] pl-[3px]">
                无
                <div className="ml-auto mr-[1px] flex h-[15px] w-[15px] items-center justify-center bg-[#f0eee4]">
                  <svg width="9" height="6" viewBox="0 0 9 6"><path d="M1 1l3.500 3.500L8 1" stroke="#a5a293" strokeWidth="1.600" fill="none" /></svg>
                </div>
              </div>
            </div>
            <div className="mt-[4px]"><Check disabled label="将 IPW 保存为组件" /></div>
            <div className="mt-[5px]"><Sep /></div>
            <div className="mt-[5px] h-[12px] pt-px leading-[12px]">小平面实体</div>
            <div className="ml-[25px] mt-[4px] flex h-[22px] w-[175px] items-center rounded-[4px] border border-[#d0cdbd] pl-[5px]">
              <Radio on label="IPW" w="w-[56px]" />
              <Radio label="过切" w="w-[56px]" />
              <Radio label="超出" w="w-[50px]" />
            </div>
            <div className="mt-[4px] flex gap-[5px]">
              <Btn disabled label="创建" />
              <Btn disabled label="删除" className="w-[110px]" />
            </div>
            <div className="mt-[5px]"><Sep /></div>
            <div className="mt-[4px]"><Check checked label="IPW 干涉检查" /></div>
            <div className="mt-[6px]"><Check checked label="检查刀柄碰撞" /></div>
            <div className="mt-[6px] flex gap-[5px]">
              <Btn label="选项" />
              <Btn disabled label="列表" className="w-[110px]" />
            </div>
            <div className="mt-[6px]"><Sep /></div>
            <div className="mt-[3px]"><Btn label="重置" className="w-[226px]" /></div>
            <div className="mt-[4px]"><Sep /></div>
            <div className="mt-[3px]"><Check label="抑制动画" /></div>
          </div>

          <div className="mt-[9px] h-[12px] shrink-0 pl-[3px] leading-[12px]">动画速度</div>
          <div className="mt-[5px] h-[12px] shrink-0 pr-[13px] text-right text-[10px] leading-[12px]">10</div>
          <div className="mt-[3px] shrink-0"><Slider /></div>
          <div className="mt-[2px] flex h-[12px] shrink-0 justify-between pl-[10px] pr-[5px] text-[10px] leading-[12px]">
            <span>1</span>
            <span>10</span>
          </div>

          <div className="ml-[6px] mt-[4px] flex shrink-0 gap-[4px]">
            {transport.map((s) => (
              <div key={s} className="flex h-[30px] w-[30px] items-center justify-center rounded-[3px] border border-[#003c74] bg-linear-to-b from-white to-[#e8e6da]">
                <svg width="22" height="22" viewBox="0 0 22 22">{transportPath[s]}</svg>
              </div>
            ))}
            <div className="flex h-[30px] w-[30px] items-center justify-center rounded-[3px] border border-[#d8d5c7] bg-[#f4f2e8]">
              <div className="h-[12px] w-[12px] bg-[#aca899]" />
            </div>
          </div>
          <div className="mt-[8px] h-px shrink-0 bg-[#b5b2a4] shadow-[0_1px_0_white]" />
          <div className="mt-[5px] flex shrink-0 justify-end gap-[7px] pr-[11px]">
            <Btn label="确定" className="!h-[19px] w-[52px] shadow-[inset_0_0_0_2px_#a8c4ec]" />
            <Btn label="取消" className="!h-[19px] w-[52px]" />
          </div>
        </div>
      </div>

      {/* red brush watermark */}
      <svg width="140" height="134" viewBox="0 730 140 134" className="absolute left-0 top-[730px]">
        <circle cx="68" cy="796" r="54" fill="none" stroke="#ee0a0a" strokeWidth="3" />
        <path d="M32 757A54 56 0 0 0 62 851" fill="none" stroke="#ee0a0a" strokeWidth="9" />
        <path d="M62 851A54 54 0 0 0 118 818" fill="none" stroke="#ee0a0a" strokeWidth="6" />
        <path d="M54 741A56 56 0 0 1 123 786" fill="none" stroke="#ee0a0a" strokeWidth="3" strokeDasharray="14 2 5 1" />
        <circle cx="68" cy="763" r="5.500" fill="#ee0a0a" />
        <path d="M52 765Q64 772 72 776L95 758Q84 776 78 784L88 800H80L68 786L60 800H56L66 780Q58 774 52 765Z" fill="#ee0a0a" />
        <text x="35" y="814" fontSize="16" fontWeight="700" textLength="85" lengthAdjust="spacingAndGlyphs" fontFamily="Liberation Sans, Noto Sans CJK SC" fill="#ee0a0a">UG爱好者</text>
        <text x="28" y="827" fontSize="10" fontWeight="700" textLength="90" fontFamily="Liberation Sans" fill="#fff" stroke="#ee0a0a" strokeWidth="2.500" paintOrder="stroke">WWW.UGSNX.COM</text>
      </svg>
    </div>
  );
}
